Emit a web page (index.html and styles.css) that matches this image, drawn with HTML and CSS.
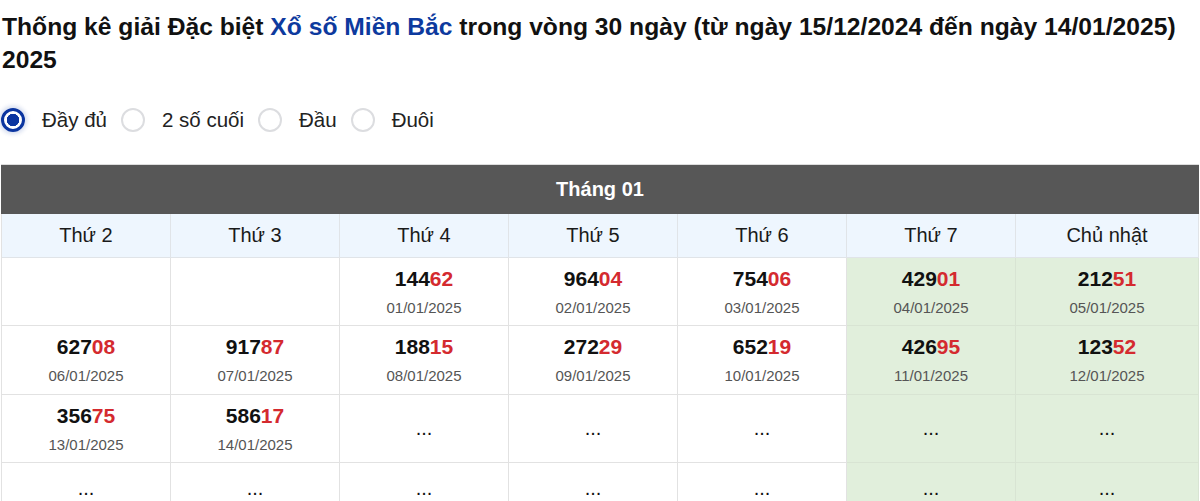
FILE: index.html
```html
<!DOCTYPE html>
<html lang="vi">
<head>
<meta charset="utf-8">
<link rel="stylesheet" href="styles.css">
</head>
<body>
<div class="page">
  <h1 class="title">Thống kê giải Đặc biệt <span class="link">Xổ số Miền Bắc</span> trong vòng 30 ngày (từ ngày 15/12/2024 đến ngày 14/01/2025) 2025</h1>
  <div class="radios">
    <label class="opt"><span class="radio on"></span><span>Đầy đủ</span></label>
    <label class="opt"><span class="radio"></span><span>2 số cuối</span></label>
    <label class="opt"><span class="radio"></span><span>Đầu</span></label>
    <label class="opt"><span class="radio"></span><span>Đuôi</span></label>
  </div>
  <div class="cal">
    <div class="month">Tháng 01</div>
    <div class="grid">
      <div class="dh">Thứ 2</div><div class="dh">Thứ 3</div><div class="dh">Thứ 4</div><div class="dh">Thứ 5</div><div class="dh">Thứ 6</div><div class="dh">Thứ 7</div><div class="dh">Chủ nhật</div>

      <div class="c"></div>
      <div class="c"></div>
      <div class="c"><div class="n">144<b>62</b></div><div class="d">01/01/2025</div></div>
      <div class="c"><div class="n">964<b>04</b></div><div class="d">02/01/2025</div></div>
      <div class="c"><div class="n">754<b>06</b></div><div class="d">03/01/2025</div></div>
      <div class="c we"><div class="n">429<b>01</b></div><div class="d">04/01/2025</div></div>
      <div class="c we"><div class="n">212<b>51</b></div><div class="d">05/01/2025</div></div>

      <div class="c"><div class="n">627<b>08</b></div><div class="d">06/01/2025</div></div>
      <div class="c"><div class="n">917<b>87</b></div><div class="d">07/01/2025</div></div>
      <div class="c"><div class="n">188<b>15</b></div><div class="d">08/01/2025</div></div>
      <div class="c"><div class="n">272<b>29</b></div><div class="d">09/01/2025</div></div>
      <div class="c"><div class="n">652<b>19</b></div><div class="d">10/01/2025</div></div>
      <div class="c we"><div class="n">426<b>95</b></div><div class="d">11/01/2025</div></div>
      <div class="c we"><div class="n">123<b>52</b></div><div class="d">12/01/2025</div></div>

      <div class="c"><div class="n">356<b>75</b></div><div class="d">13/01/2025</div></div>
      <div class="c"><div class="n">586<b>17</b></div><div class="d">14/01/2025</div></div>
      <div class="c e">...</div>
      <div class="c e">...</div>
      <div class="c e">...</div>
      <div class="c e we">...</div>
      <div class="c e we">...</div>

      <div class="c e last">...</div>
      <div class="c e last">...</div>
      <div class="c e last">...</div>
      <div class="c e last">...</div>
      <div class="c e last">...</div>
      <div class="c e last we">...</div>
      <div class="c e last we">...</div>
    </div>
  </div>
</div>
</body>
</html>
```

FILE: styles.css
```css
* { box-sizing: border-box; }
body {
  margin: 0;
  font-family: "Liberation Sans", Arial, sans-serif;
  color: #111;
  background: #fff;
}
.page {
  padding: 10px 1px 0 1px;
}
.title {
  margin: 0 0 0 1px;
  font-size: 24.65px;
  line-height: 33px;
  font-weight: bold;
  color: #111;
}
.title .link {
  color: #0d3a9e;
}
.radios {
  display: flex;
  align-items: center;
  margin-top: 29px;
  height: 30px;
  gap: 14px;
}
.opt {
  display: flex;
  align-items: center;
  gap: 17px;
  font-size: 20.5px;
  color: #222;
}
.radio {
  width: 24px;
  height: 24px;
  border-radius: 50%;
  border: 2px solid #dcdde0;
  background: #fff;
  flex: none;
}
.radio.on {
  border: 3px solid #0b35a0;
  background: radial-gradient(circle, #0b35a0 0 6px, #fff 6.5px);
  box-shadow: 0 0 4px 2px rgba(11, 53, 160, 0.18);
}
.cal {
  margin-top: 29px;
  border-top: 1px solid #ddd;
}
.month {
  height: 49px;
  background: #575757;
  color: #fff;
  font-weight: bold;
  font-size: 20px;
  display: flex;
  align-items: center;
  justify-content: center;
}
.grid {
  display: grid;
  grid-template-columns: repeat(6, 169px) 1fr;
  grid-template-rows: 44px 68px 69px 68px auto;
  border-left: 1px solid #e2e2e2;
}
.dh {
  background: #eef6fe;
  font-size: 20px;
  color: #1a1a1a;
  display: flex;
  align-items: center;
  justify-content: center;
  border-right: 1px solid #e0e4e8;
  border-bottom: 1px solid #e0e4e8;
}
.c {
  border-right: 1px solid #e2e2e2;
  border-bottom: 1px solid #e2e2e2;
  display: flex;
  flex-direction: column;
  align-items: center;
  padding-top: 8px;
}
.c.we {
  background: #e1efdc;
  border-color: #d8e4d3;
}
.n {
  font-size: 21px;
  font-weight: bold;
  color: #111;
  line-height: 26px;
}
.n b {
  color: #d42a2f;
}
.d {
  margin-top: 7px;
  font-size: 15px;
  color: #555;
  line-height: 18px;
}
.c.e {
  justify-content: center;
  padding-top: 0;
  font-size: 20px;
  color: #111;
}
.c.e.last {
  justify-content: flex-start;
  padding: 13px 0;
  line-height: 24px;
}
```
